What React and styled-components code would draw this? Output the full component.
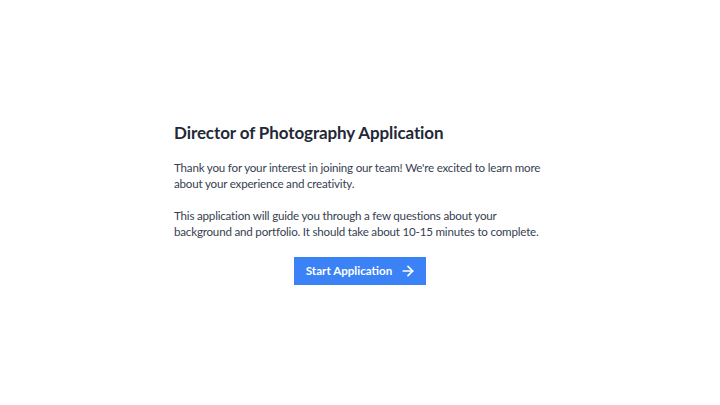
import React from "react";
import styled, { createGlobalStyle } from "styled-components";

const Global = createGlobalStyle`
  html, body { margin: 0; padding: 0; background: #ffffff; }
  body { font-family: Lato, "Liberation Sans", sans-serif; }
  * { box-sizing: border-box; }
`;

const Page = styled.main`
  min-height: 100vh;
  padding-bottom: 2px;
  display: flex;
  align-items: center;
  justify-content: center;
`;

const Card = styled.section`
  width: 372px;
  display: flex;
  flex-direction: column;
`;

const Title = styled.h1`
  margin: 0 0 13px;
  font-size: 17px;
  line-height: 28px;
  font-weight: 700;
  letter-spacing: -0.1px;
  color: #1f2937;
`;

const Text = styled.p`
  margin: 0 0 16px;
  font-size: 11.6px;
  line-height: 16px;
  letter-spacing: -0.2px;
  color: #374151;
`;

const Actions = styled.div`
  display: flex;
  justify-content: center;
  margin-top: 1px;
`;

const Button = styled.button`
  display: inline-flex;
  align-items: center;
  gap: 8px;
  height: 28px;
  padding: 0 10px 0 12px;
  border: none;
  background: #3b82f6;
  color: #ffffff;
  font-family: inherit;
  font-size: 11.6px;
  font-weight: 700;
  cursor: pointer;
`;

const Arrow = () => (
  <svg width="16" height="16" viewBox="0 0 24 24" fill="none" stroke="currentColor" strokeWidth="2.6" strokeLinecap="round" strokeLinejoin="round">
    <path d="M5 12h14" />
    <path d="M12 5l7 7-7 7" />
  </svg>
);

export default function App() {
  return (
    <>
      <Global />
      <Page>
        <Card>
          <Title>Director of Photography Application</Title>
          <Text>
            Thank you for your interest in joining our team! We're excited to learn more about your experience and creativity.
          </Text>
          <Text>
            This application will guide you through a few questions about your background and portfolio. It should take about 10-15 minutes to complete.
          </Text>
          <Actions>
            <Button>
              Start Application
              <Arrow />
            </Button>
          </Actions>
        </Card>
      </Page>
    </>
  );
}
